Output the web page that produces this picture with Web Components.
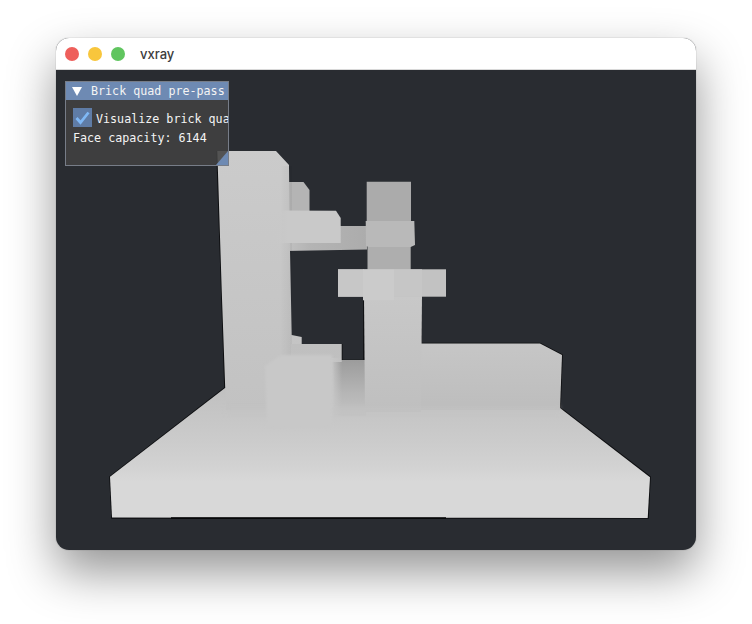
<!DOCTYPE html>
<html><head><meta charset="utf-8"><title>vxray</title>
<style>html,body{margin:0;background:#fff}body{width:752px;height:624px;overflow:hidden;padding:38px 0 0 56px;box-sizing:border-box}</style></head>
<body>
<app-window name="vxray">
  <voxel-scene></voxel-scene>
  <imgui-panel slot="overlay" heading="Brick quad pre-pass">
    <imgui-check label="Visualize brick qua"></imgui-check>
    <imgui-text>Face capacity: 6144</imgui-text>
  </imgui-panel>
</app-window>
<script>
class TrafficLights extends HTMLElement{constructor(){super();this.attachShadow({mode:'open'}).innerHTML=`<style>
:host{display:flex;gap:9px;align-items:center}
i{display:block;width:14px;height:14px;border-radius:50%}
.r{background:#ee5f5b}.y{background:#f8c63c}.g{background:#60c55f}
</style><i class="r"></i><i class="y"></i><i class="g"></i>`}}
customElements.define('traffic-lights',TrafficLights);

class AppWindow extends HTMLElement{constructor(){super();this.attachShadow({mode:'open'}).innerHTML=`<style>
:host{display:flex;flex-direction:column;position:relative;width:640px;height:512px;border-radius:13px;background:#292c31;box-shadow:0 0 0 1px rgba(0,0,0,.05),0 22px 48px 0 rgba(0,0,0,.42)}
header{height:32px;flex:none;display:flex;align-items:center;gap:15px;padding:1px 9px 0;box-sizing:border-box;background:#fff;border-radius:13px 13px 0 0;font:500 13px/1 "Inter","Liberation Sans",sans-serif;color:#3c3c3c;border-bottom:1px solid #d8d8d8}
main{flex:1;position:relative;overflow:hidden;border-radius:0 0 13px 13px}
.ov{position:absolute;left:9px;top:11px}
</style><header><traffic-lights></traffic-lights><span id="t"></span></header><main><slot></slot><div class="ov"><slot name="overlay"></slot></div></main>`;
this.shadowRoot.getElementById('t').textContent=this.getAttribute('name')}}
customElements.define('app-window',AppWindow);

class VoxelScene extends HTMLElement{constructor(){super();this.attachShadow({mode:'open'}).innerHTML=`<style>
:host{display:block;width:640px;height:480px}svg{display:block}
</style>
<svg width="640" height="480" viewBox="56 70 640 480" xmlns="http://www.w3.org/2000/svg">
<defs>
<linearGradient id="floor" x1="0" y1="0" x2="0" y2="1"><stop offset="0" stop-color="#c0c0c0"/><stop offset=".4" stop-color="#cbcbcb"/><stop offset=".6" stop-color="#d2d2d2"/><stop offset=".72" stop-color="#d8d8d8"/><stop offset="1" stop-color="#d8d8d8"/></linearGradient>
<linearGradient id="col" x1="0" y1="0" x2="0" y2="1"><stop offset="0" stop-color="#cbcbcb"/><stop offset="1" stop-color="#c2c2c2"/></linearGradient>
<linearGradient id="colEdge" x1="0" y1="0" x2="1" y2="0"><stop offset="0" stop-color="#000" stop-opacity="0"/><stop offset="1" stop-color="#000" stop-opacity=".05"/></linearGradient>
<linearGradient id="armFade" x1="0" y1="0" x2="1" y2="0"><stop offset="0" stop-color="#c9c9c9" stop-opacity="0"/><stop offset=".18" stop-color="#c9c9c9"/><stop offset="1" stop-color="#c9c9c9"/></linearGradient>
<linearGradient id="slab" x1="0" y1="0" x2="0" y2="1"><stop offset="0" stop-color="#c6c6c6"/><stop offset="1" stop-color="#bdbdbd"/></linearGradient>
<linearGradient id="gap" x1="0" y1="0" x2="0" y2="1"><stop offset="0" stop-color="#9c9c9c"/><stop offset=".6" stop-color="#b6b6b6"/><stop offset="1" stop-color="#c3c3c3"/></linearGradient>
<linearGradient id="post" x1="0" y1="0" x2="0" y2="1"><stop offset="0" stop-color="#c8c8c8"/><stop offset="1" stop-color="#bfbfbf"/></linearGradient>
<linearGradient id="beamShade" x1="0" y1="0" x2="1" y2="0"><stop offset="0" stop-color="#c2c2c2"/><stop offset=".3" stop-color="#b4b4b4"/><stop offset="1" stop-color="#acacac"/></linearGradient>
<linearGradient id="blockSide" x1="0" y1="0" x2="1" y2="0"><stop offset="0" stop-color="#c7c7c7"/><stop offset="1" stop-color="#c7c7c7" stop-opacity="0"/></linearGradient>
<linearGradient id="blockTop" x1="0" y1="0" x2="0" y2="1"><stop offset="0" stop-color="#bfbfbf"/><stop offset="1" stop-color="#c3c3c3"/></linearGradient>
<filter id="soft" x="-10%" y="-10%" width="120%" height="120%"><feGaussianBlur stdDeviation="1.2"/></filter>
<filter id="soft2" x="-10%" y="-50%" width="120%" height="200%"><feGaussianBlur stdDeviation="2.2"/></filter>
</defs>
<g fill="none" stroke="#0c0d0f" stroke-width="1.6" stroke-linejoin="miter">
<path d="M217 151 225 388 110 477 112 518H648L650 477 560 408 562 355 540 343.5H421V297M341.7 344V360.5H364V297"/>
</g>
<polygon points="225,388 560,408 650,477.3 647.7,518 112,517.5 110,476.7" fill="url(#floor)"/>
<polygon points="421,343.5 540,343.5 562,355 560,410 421,410" fill="url(#slab)"/>
<rect x="328" y="360" width="38" height="56" fill="url(#gap)"/>
<polygon points="289,182 303.5,182 309.5,190 309.5,212 289,212" fill="#b4b4b4"/>
<polygon points="285,226 367,226 367,249.5 285,251" fill="url(#beamShade)"/>
<polygon points="366.7,181.7 411,181.7 411,222 366.7,222" fill="#ababab"/>
<polygon points="367.5,245 410.7,245 410.7,270 367.5,270" fill="#aeaeae"/>
<polygon points="365.7,221 414.3,221 415,245 410.7,247 369,247 366,246" fill="#b9b9b9"/>
<polygon points="217.3,151 276,151 289,165 289.5,218 290,250 291.7,335 301.7,337 301.7,344 292,360 292,410 226,410 221.7,290" fill="url(#col)"/>
<rect x="280" y="166" width="12" height="230" fill="url(#colEdge)"/>
<polygon points="275,210.5 336,210.7 340.7,218 340.7,243 275,243" fill="url(#armFade)"/>
<polygon points="364,296 422,296 421,412 365,412" fill="url(#post)"/>
<rect x="338" y="269.3" width="108" height="27.4" fill="#c2c2c2"/>
<rect x="338" y="269.3" width="26" height="27.4" fill="#c7c7c7"/>
<rect x="363" y="269.3" width="31" height="31" fill="#cbcbcb"/>
<rect x="394" y="269.3" width="28" height="27.4" fill="#c6c6c6"/>
<polygon points="291,344 341.7,344 341.7,362 331,362 331,410 291,410" fill="url(#blockTop)"/>
<rect x="331" y="358" width="11" height="58" fill="url(#blockSide)"/>
<rect x="226" y="406" width="334" height="8" fill="#c3c3c3" opacity=".5" filter="url(#soft2)"/>
<polygon points="265,366 281,355 332,355 333,390 332,427 267,429" fill="#c8c8c8" filter="url(#soft)"/>
<path d="M171 518H446" stroke="#050506" stroke-width="1.4"/>
</svg>`}}
customElements.define('voxel-scene',VoxelScene);

class ImguiPanel extends HTMLElement{constructor(){super();this.attachShadow({mode:'open'}).innerHTML=`<style>
:host{display:block;position:relative;width:164px;height:85px;box-sizing:border-box;border:1px solid #777d88;background:rgba(66,66,66,.87);overflow:hidden;font:11.7px/13px "DejaVu Sans Mono","Liberation Mono",monospace;color:#f4f4f4}
header{height:18px;box-sizing:border-box;background:#6e8ab3;display:flex;align-items:center;gap:9px;padding:1px 0 0 6px;white-space:pre}
header svg{flex:none}
section{display:flex;flex-direction:column;gap:5px;padding:8px 0 0 7px}
.grip{position:absolute;right:0;bottom:0;width:12px;height:14px}
</style><header><svg width="10" height="9" viewBox="0 0 10 9"><path d="M0 0H10L5 9Z" fill="#fff"/></svg><span id="h"></span></header><section><slot></slot></section>
<svg class="grip" viewBox="0 0 12 14"><path d="M12 0V14H0Z" fill="#6e8ab3"/></svg>`;
this.shadowRoot.getElementById('h').textContent=this.getAttribute('heading')}}
customElements.define('imgui-panel',ImguiPanel);

class ImguiCheck extends HTMLElement{constructor(){super();this.attachShadow({mode:'open'}).innerHTML=`<style>
:host{display:flex;align-items:center;gap:4px;white-space:pre;height:19px}
b{display:flex;align-items:center;justify-content:center;width:19px;height:19px;background:#5f7ca6;flex:none}
span{padding-top:3px}
</style><b><svg width="15" height="15" viewBox="0 0 15 15"><path d="M1.5 8 5.5 12.5 13.5 2.5" fill="none" stroke="#7fb8f5" stroke-width="2.8"/></svg></b><span id="l"></span>`;
this.shadowRoot.getElementById('l').textContent=this.getAttribute('label')}}
customElements.define('imgui-check',ImguiCheck);

class ImguiText extends HTMLElement{constructor(){super();this.attachShadow({mode:'open'}).innerHTML=`<style>:host{display:block;white-space:pre}</style><slot></slot>`}}
customElements.define('imgui-text',ImguiText);
</script>
</body></html>
